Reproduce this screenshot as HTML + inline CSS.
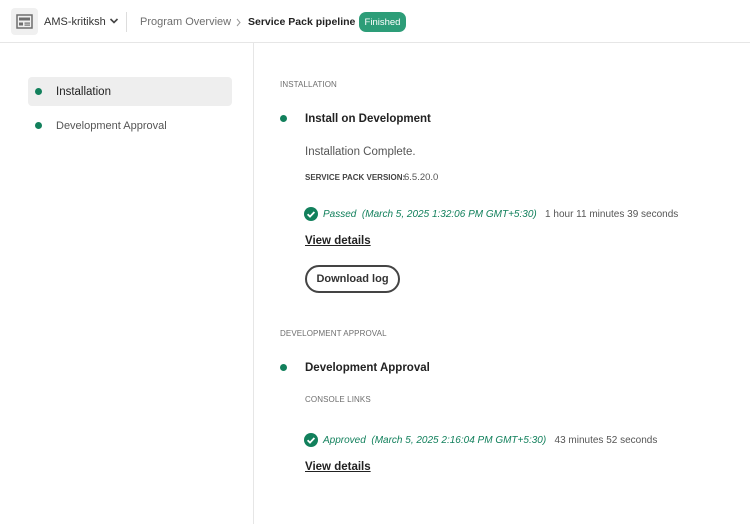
<!DOCTYPE html>
<html><head><style>
*{margin:0;padding:0;box-sizing:border-box}
body{width:750px;height:524px;background:#fff;font-family:"Liberation Sans",sans-serif;color:#222;position:relative;overflow:hidden}
.a{position:absolute;white-space:nowrap}
.dot{position:absolute;width:7px;height:7px;border-radius:50%;background:#12805c}
.cap{font-size:8px;color:#6e6e6e;letter-spacing:.1px}
.g{color:#12805c;font-style:italic}
.m{color:#555}
.lnk{font-weight:bold;text-decoration:underline;font-size:11.5px;color:#222}
</style></head><body>
<div class="a" style="left:0;top:42px;width:750px;height:1px;background:#e6e6e6"></div>
<div class="a" style="left:253px;top:43px;width:1px;height:481px;background:#e6e6e6"></div>
<div class="a" style="left:11px;top:8px;width:27px;height:27px;background:#f0f0f0;border-radius:4px"></div>
<svg class="a" style="left:16px;top:14px" width="17" height="15" viewBox="0 0 17 15"><rect x="1" y="1" width="15" height="13" fill="none" stroke="#6e6e6e" stroke-width="1.5"/><rect x="3" y="3.5" width="11" height="3" fill="#6e6e6e"/><rect x="3" y="8.5" width="4" height="3" fill="#6e6e6e"/><rect x="8.5" y="8.5" width="5.5" height="1.2" fill="#6e6e6e"/><rect x="8.5" y="10.5" width="5.5" height="1.2" fill="#6e6e6e"/></svg>
<div class="a" style="left:44px;top:16px;font-size:11px;color:#333">AMS-kritiksh</div>
<svg class="a" style="left:109px;top:17px" width="10" height="8"><path d="M1.5 2l3.5 3.5L8.5 2" fill="none" stroke="#444" stroke-width="1.6"/></svg>
<div class="a" style="left:126px;top:12px;width:1px;height:20px;background:#ddd"></div>
<div class="a" style="left:140px;top:16px;font-size:11px;color:#6e6e6e">Program Overview</div>
<svg class="a" style="left:236px;top:18px" width="6" height="9"><path d="M1 1l3 3.5L1 8" fill="none" stroke="#999" stroke-width="1"/></svg>
<div class="a" style="left:248px;top:16px;font-size:10.5px;font-weight:bold;color:#222">Service Pack pipeline</div>
<div class="a" style="left:359px;top:12px;width:47px;height:20px;background:#2d9d78;border-radius:7px;color:#fff;font-size:9.5px;display:flex;align-items:center;justify-content:center">Finished</div>

<div class="a" style="left:28px;top:77px;width:204px;height:29px;background:#eeeeee;border-radius:4px"></div>
<div class="dot" style="left:35px;top:88px"></div>
<div class="a" style="left:56px;top:86px;font-size:11.5px;color:#222">Installation</div>
<div class="dot" style="left:35px;top:122px"></div>
<div class="a" style="left:56px;top:120px;font-size:11px;color:#555">Development Approval</div>

<div class="a cap" style="left:280px;top:80px">INSTALLATION</div>
<div class="dot" style="left:280px;top:115px"></div>
<div class="a" style="left:305px;top:113px;font-size:11.5px;font-weight:bold">Install on Development</div>
<div class="a m" style="left:305px;top:146px;font-size:11.5px">Installation Complete.</div>
<div class="a" style="left:305px;top:173px;font-size:8px;font-weight:bold;color:#444">SERVICE PACK VERSION:</div>
<div class="a m" style="left:404px;top:172px;font-size:9.5px">6.5.20.0</div>
<svg class="a" style="left:304px;top:207px" width="14" height="14"><circle cx="7" cy="7" r="7" fill="#12805c"/><path d="M3.6 7.2l2.4 2.4 4.4-4.6" fill="none" stroke="#fff" stroke-width="1.8"/></svg>
<div class="a" style="left:323px;top:209px;font-size:10px"><span class="g">Passed&nbsp; (March 5, 2025 1:32:06 PM GMT+5:30)</span><span class="m">&nbsp;&nbsp; 1 hour 11 minutes 39 seconds</span></div>
<div class="a lnk" style="left:305px;top:235px">View details</div>
<div class="a" style="left:305px;top:265px;width:95px;height:28px;border:2px solid #444;border-radius:14px;font-size:11px;font-weight:bold;color:#333;display:flex;align-items:center;justify-content:center">Download log</div>

<div class="a cap" style="left:280px;top:329px">DEVELOPMENT APPROVAL</div>
<div class="dot" style="left:280px;top:364px"></div>
<div class="a" style="left:305px;top:362px;font-size:11.5px;font-weight:bold">Development Approval</div>
<div class="a cap" style="left:305px;top:395px">CONSOLE LINKS</div>
<svg class="a" style="left:304px;top:433px" width="14" height="14"><circle cx="7" cy="7" r="7" fill="#12805c"/><path d="M3.6 7.2l2.4 2.4 4.4-4.6" fill="none" stroke="#fff" stroke-width="1.8"/></svg>
<div class="a" style="left:323px;top:435px;font-size:10px"><span class="g">Approved&nbsp; (March 5, 2025 2:16:04 PM GMT+5:30)</span><span class="m">&nbsp;&nbsp; 43 minutes 52 seconds</span></div>
<div class="a lnk" style="left:305px;top:461px">View details</div>
</body></html>
